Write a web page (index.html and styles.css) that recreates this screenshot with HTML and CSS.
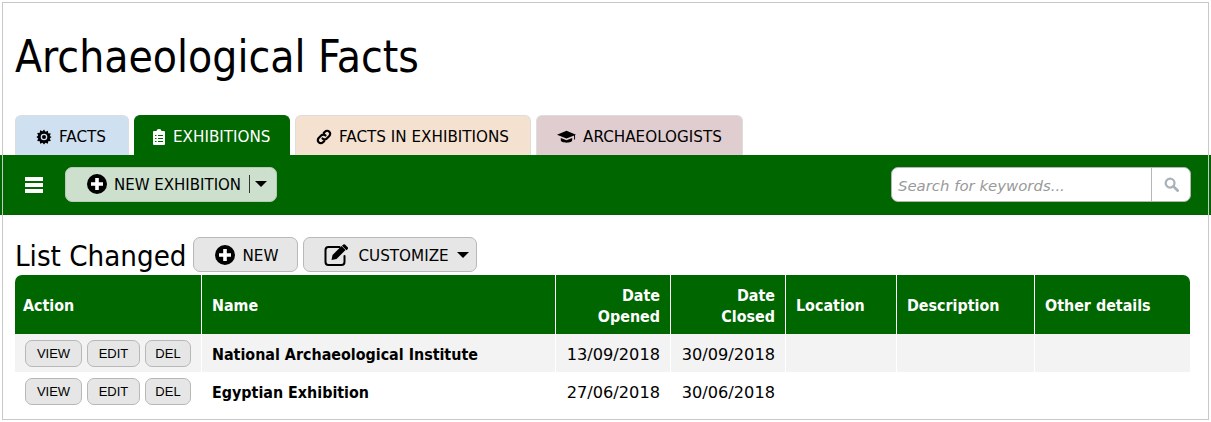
FILE: index.html
```html
<!DOCTYPE html>
<html lang="en">
<head>
  <meta charset="UTF-8">
  <title>Archaeological Facts</title>
  <meta name="viewport" content="width=device-width, initial-scale=1.0">
  <link rel="stylesheet" href="styles.css">
</head>
<body>
  <div class="frame">
    <h1 class="site-title">Archaeological Facts</h1>

    <div class="tabs">
      <a class="tab tab-facts">
        <svg class="tab-icon" viewBox="0 0 16 16"><path d="M8 .5l1.500 2.200 2.400-1 .3 2.600 2.600.3-1 2.400L15.500 8l-1.700 1.500 1 2.400-2.600.3-.3 2.600-2.400-1L8 15.500l-1.500-1.700-2.400 1-.3-2.600-2.600-.3 1-2.400L.5 8l1.700-1.500-1-2.400 2.600-.3.3-2.600 2.400 1z"/><circle cx="8" cy="8" r="3.300" fill="#cfe0f0"/><circle cx="8" cy="8" r="2"/></svg>
        FACTS
      </a>
      <a class="tab tab-exhibitions">
        <svg class="tab-icon" viewBox="0 0 12 16"><path fill="#fff" d="M1 2h2.500a2.500 2 0 0 1 5 0H11a1 1 0 0 1 1 1v12a1 1 0 0 1-1 1H1a1 1 0 0 1-1-1V3a1 1 0 0 1 1-1z"/><path fill="#060" d="M2 6h1.500v1H2zm3 0h5v1H5zM2 9h1.500v1H2zm3 0h5v1H5zm-3 3h1.500v1H2zm3 0h5v1H5z"/></svg>
        EXHIBITIONS
      </a>
      <a class="tab tab-links">
        <svg class="tab-icon" viewBox="0 0 16 16"><path fill="none" stroke="#000" stroke-width="2.200" stroke-linecap="round" d="M6.500 9.500a3 3 0 0 0 4.300 0l2.500-2.500a3 3 0 0 0-4.300-4.300L7.800 3.900M9.500 6.500a3 3 0 0 0-4.300 0L2.700 9a3 3 0 0 0 4.300 4.300l1.200-1.200"/></svg>
        FACTS IN EXHIBITIONS
      </a>
      <a class="tab tab-people">
        <svg class="tab-icon tab-icon-wide" viewBox="0 0 20 15"><path d="M10 1L0 5l10 4 8-3.200V10h1V5.400L20 5z"/><path d="M4 8.500V11c0 1.500 3 2.500 6 2.500s6-1 6-2.500V8.500l-6 2.400z"/></svg>
        ARCHAEOLOGISTS
      </a>
    </div>

    <div class="navbar">
      <div class="burger"><span></span><span></span><span></span></div>
      <button class="new-main">
        <svg class="plus" viewBox="0 0 20 20"><circle cx="10" cy="10" r="10"/><path fill="#fff" d="M8.200 4h3.600v4.200H16v3.600h-4.200V16H8.200v-4.200H4V8.200h4.200z"/></svg>
        <span class="btn-label">NEW EXHIBITION</span>
        <span class="split"></span>
        <span class="caret"></span>
      </button>
      <div class="search">
        <span class="search-input">Search for keywords...</span>
        <span class="search-btn">
          <svg viewBox="0 0 16 16" width="15" height="15"><circle cx="6.500" cy="6.500" r="4.700" fill="none" stroke="#a9b2b8" stroke-width="2.400"/><path d="M10 10l4.500 4.500" stroke="#a9b2b8" stroke-width="3" stroke-linecap="round"/></svg>
        </span>
      </div>
    </div>

    <div class="list-head">
      <h2 class="list-title">List Changed</h2>
      <button class="tool-btn tool-new">
        <svg class="plus" viewBox="0 0 20 20"><circle cx="10" cy="10" r="10"/><path fill="#fff" d="M8.200 4h3.600v4.200H16v3.600h-4.200V16H8.200v-4.200H4V8.200h4.200z"/></svg>
        <span class="btn-label">NEW</span>
      </button>
      <button class="tool-btn tool-custom">
        <svg class="edit" viewBox="0 0 25 22"><path fill="none" stroke="#000" stroke-width="2" stroke-linecap="round" d="M20 12v6a3 3 0 0 1-3 3H4a3 3 0 0 1-3-3V6a3 3 0 0 1 3-3h11"/><path d="M8 11l9-9 4 4-9 9-5 1zM18.500 .8a1.500 1.500 0 0 1 2-.2l2.700 2.700a1.500 1.500 0 0 1-.2 2l-1 1-4.500-4.500z"/></svg>
        <span class="btn-label">CUSTOMIZE</span>
        <span class="caret"></span>
      </button>
    </div>

    <table class="grid">
      <thead>
        <tr>
          <th class="col-action">Action</th>
          <th class="col-name">Name</th>
          <th class="col-date num">Date<br>Opened</th>
          <th class="col-date num">Date<br>Closed</th>
          <th class="col-loc">Location</th>
          <th class="col-desc">Description</th>
          <th>Other details</th>
        </tr>
      </thead>
      <tbody>
        <tr class="odd">
          <td class="actions"><button>VIEW</button><button>EDIT</button><button>DEL</button></td>
          <td class="name">National Archaeological Institute</td>
          <td class="num">13/09/2018</td>
          <td class="num">30/09/2018</td>
          <td></td>
          <td></td>
          <td></td>
        </tr>
        <tr>
          <td class="actions"><button>VIEW</button><button>EDIT</button><button>DEL</button></td>
          <td class="name">Egyptian Exhibition</td>
          <td class="num">27/06/2018</td>
          <td class="num">30/06/2018</td>
          <td></td>
          <td></td>
          <td></td>
        </tr>
      </tbody>
    </table>
  </div>
</body>
</html>
```

FILE: styles.css
```css
* { box-sizing: border-box; }

body {
  margin: 0;
  background: #fff;
  color: #000;
  font-family: "DejaVu Sans", sans-serif;
}

.frame {
  position: relative;
  margin: 2px 2px 0 2px;
  height: 418px;
  padding: 0 13px;
}

/* the thin outline runs over the green bar */
.frame::after {
  content: "";
  position: absolute;
  top: 0;
  right: 0;
  bottom: 0;
  left: 0;
  border: 1px solid #c8c8c8;
  pointer-events: none;
}

.site-title {
  margin: 0;
  padding-top: 28px;
  height: 113px;
  font-size: 44px;
  font-stretch: condensed;
  font-weight: normal;
  line-height: 54px;
}

/* tabs */
.tabs {
  display: flex;
  gap: 5px;
  height: 40px;
}

.tab {
  display: flex;
  align-items: center;
  gap: 7px;
  height: 40px;
  padding: 2px 0 0 20px;
  border: 1px solid #ddd;
  border-bottom: none;
  border-radius: 6px 6px 0 0;
  font-size: 15.2px;
}

.tab-facts { width: 114px; background: #cfe0f0; }
.tab-exhibitions { width: 156px; padding-left: 16px; gap: 6px; background: #060; color: #fff; border-color: #060; }
.tab-links { width: 236px; background: #f5e1d0; }
.tab-people { width: 207px; background: #e0cdcf; }

.tab-icon { width: 16px; height: 16px; flex: none; }
.tab-icon-wide { width: 19px; }

/* green bar */
.navbar {
  display: flex;
  align-items: center;
  height: 60px;
  margin: 0 -15px;
  padding: 0 20px 2px 25px;
  background: #060;
}

.burger {
  display: flex;
  flex-direction: column;
  gap: 2px;
  width: 18px;
  margin: 2px 22px 0 0;
}

.burger span {
  height: 4px;
  background: #fff;
}

.new-main {
  display: flex;
  align-items: center;
  width: 212px;
  height: 35px;
  padding: 0 0 0 21px;
  background: #cde0cd;
  border: 1px solid #b9c9b9;
  border-radius: 7px;
  font: inherit;
  font-size: 15px;
  color: #000;
}

.new-main .plus { margin-right: 7px; }

.btn-label { padding-top: 2px; }

.split {
  width: 1px;
  height: 18px;
  margin: 0 5px 0 8px;
  background: #333;
}

.caret {
  width: 0;
  height: 0;
  border-left: 6px solid transparent;
  border-right: 6px solid transparent;
  border-top: 6px solid #000;
}

.plus { width: 20px; height: 20px; flex: none; }

.search {
  display: flex;
  width: 300px;
  height: 35px;
  margin-left: auto;
  background: #fff;
  border: 1px solid #b5b5b5;
  border-radius: 7px;
}

.search-input {
  flex: 1;
  padding-left: 6px;
  font-size: 14.9px;
  font-style: italic;
  line-height: 36px;
  color: #999;
}

.search-btn {
  display: flex;
  align-items: center;
  justify-content: center;
  width: 39px;
  border-left: 1px solid #b5b5b5;
}

/* list heading */
.list-head {
  display: flex;
  align-items: flex-start;
  gap: 5px;
  height: 60px;
  padding-top: 22px;
}

.list-title {
  margin: 0 2px 0 0;
  font-size: 29.2px;
  font-stretch: condensed;
  font-weight: normal;
  line-height: 38px;
}

.tool-btn {
  display: flex;
  align-items: center;
  height: 35px;
  background: #e6e6e6;
  border: 1px solid #b8b8b8;
  border-radius: 7px;
  font: inherit;
  font-size: 15.2px;
  color: #000;
}

.tool-new { width: 105px; padding-left: 21px; gap: 7px; }
.tool-custom { width: 174px; padding-left: 20px; gap: 8px; }
.edit { width: 26px; height: 22px; }

/* table */
.grid {
  width: 1175px;
  border-collapse: separate;
  border-spacing: 0;
  table-layout: fixed;
  font-size: 16.2px;
}

.grid th {
  height: 59px;
  padding: 2px 10px 0;
  background: #060;
  color: #fff;
  font-size: 15.9px;
  font-stretch: condensed;
  font-weight: bold;
  text-align: left;
  line-height: 21px;
  border-right: 1px solid #fff;
}

.grid th:first-child {
  padding-left: 8px;
  border-top-left-radius: 7px;
}

.grid th:last-child {
  border-right: none;
  border-top-right-radius: 7px;
}

.grid .num { text-align: right; }

.grid td {
  height: 38px;
  padding: 2px 10px 0;
  border-right: 1px solid #fff;
}

.grid td:last-child { border-right: none; }

.odd td { background: #f3f3f3; }

.col-action { width: 187px; }
.col-name { width: 354px; }
.col-date { width: 115px; }
.col-loc { width: 111px; }
.col-desc { width: 138px; }

.grid .name {
  font-size: 15.9px;
  font-stretch: condensed;
  font-weight: bold;
}

.grid .actions {
  padding: 0 0 0 10px;
  white-space: nowrap;
}

.actions button {
  width: 57px;
  height: 27px;
  margin-right: 5px;
  padding: 0;
  background: #e6e6e6;
  border: 1px solid #b8b8b8;
  border-radius: 7px;
  font-family: "Liberation Sans", sans-serif;
  font-size: 13px;
  color: #000;
}

.actions button:nth-child(2) { width: 53px; }
.actions button:nth-child(3) { width: 46px; }
```
